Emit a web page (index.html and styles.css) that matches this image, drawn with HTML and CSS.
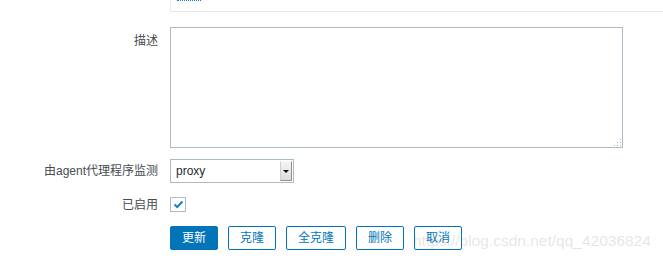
FILE: index.html
```html
<!DOCTYPE html>
<html lang="zh">
<head>
<meta charset="utf-8">
<title>Form</title>
<link rel="stylesheet" href="styles.css">
</head>
<body>
<div class="page">
  <div class="top-row">
    <div class="spacer"></div>
    <div class="top-frame"><span class="dotted-link"></span></div>
  </div>
  <form class="form">
    <label class="label label-area">描述</label>
    <div class="field">
      <div class="area-wrap">
        <textarea class="area"></textarea>
        <svg class="grip" width="9" height="9" viewBox="0 0 9 9">
          <rect x="7" y="1" width="1" height="1" fill="#b5b5b5"/>
          <rect x="7" y="4" width="1" height="1" fill="#b5b5b5"/>
          <rect x="4" y="4" width="1" height="1" fill="#b5b5b5"/>
          <rect x="7" y="7" width="1" height="1" fill="#b5b5b5"/>
          <rect x="4" y="7" width="1" height="1" fill="#b5b5b5"/>
          <rect x="1" y="7" width="1" height="1" fill="#b5b5b5"/>
        </svg>
      </div>
    </div>

    <label class="label label-mid">由agent代理程序监测</label>
    <div class="field">
      <div class="select">
        <span class="select-text">proxy</span>
        <span class="select-btn"><span class="tri"></span></span>
      </div>
    </div>

    <label class="label label-check">已启用</label>
    <div class="field field-check">
      <span class="checkbox">
        <svg width="11" height="9" viewBox="0 0 11 9"><path d="M1.5 4.5 L4.2 7 L9.5 1.5" fill="none" stroke="#1a7fc4" stroke-width="2"/></svg>
      </span>
    </div>

    <div></div>
    <div class="buttons">
      <button type="button" class="btn btn-primary">更新</button>
      <button type="button" class="btn">克隆</button>
      <button type="button" class="btn">全克隆</button>
      <button type="button" class="btn">删除</button>
      <button type="button" class="btn">取消</button>
    </div>
  </form>
  <div class="watermark">https://blog.csdn.net/qq_42036824</div>
</div>
</body>
</html>
```

FILE: styles.css
```css
html, body {
  margin: 0;
  padding: 0;
  background: #ffffff;
}
body {
  font-family: "Liberation Sans", Arial, "Noto Sans CJK SC", sans-serif;
  font-size: 12px;
  color: #3c4147;
}
.page {
  position: relative;
  width: 663px;
  height: 263px;
  overflow: hidden;
}
.top-row {
  display: grid;
  grid-template-columns: 170px 1fr;
  height: 12px;
}
.top-frame {
  border-left: 1px solid #ebebeb;
  border-bottom: 1px solid #e6e6e6;
  position: relative;
}
.dotted-link {
  display: block;
  margin-left: 6px;
  width: 24px;
  height: 1px;
  border-top: 1px dotted #1a7fc4;
}
.form {
  display: grid;
  grid-template-columns: 158px 1fr;
  column-gap: 12px;
  row-gap: 0;
  margin-top: 15px;
}
.label {
  text-align: right;
  font-family: "Liberation Sans", Arial, "Noto Sans CJK SC", sans-serif;
  font-size: 12px;
  line-height: 14px;
  color: #454b52;
}
.label-area { padding-top: 7px; }
.label-mid { padding-top: 16px; }
.label-check { padding-top: 15px; }
.area-wrap {
  position: relative;
  width: 453px;
  height: 121px;
}
.area {
  display: block;
  box-sizing: border-box;
  width: 453px;
  height: 121px;
  margin: 0;
  border: 1px solid #acbbc3;
  resize: none;
  outline: none;
  background: #fff;
}
.grip {
  position: absolute;
  right: 1px;
  bottom: 1px;
}
.select {
  margin-top: 11px;
  box-sizing: border-box;
  width: 124px;
  height: 24px;
  border: 1px solid #acbbc3;
  display: flex;
  align-items: center;
  justify-content: space-between;
  background: #fff;
}
.select-text {
  padding-left: 5px;
  font-size: 12px;
  color: #1f2c33;
}
.select-btn {
  box-sizing: border-box;
  width: 12px;
  height: 20px;
  margin-right: 1px;
  background: linear-gradient(#f4f4f4, #dcdcdc);
  border-left: 1px solid #cfcfcf;
  border-right: 1px solid #8f8f8f;
  border-bottom: 1px solid #8f8f8f;
  border-top: 1px solid #f8f8f8;
  display: flex;
  align-items: center;
  justify-content: center;
}
.tri {
  width: 0;
  height: 0;
  border-left: 3px solid transparent;
  border-right: 3px solid transparent;
  border-top: 3px solid #111;
}
.field-check {
  padding-top: 14px;
}
.checkbox {
  box-sizing: border-box;
  display: flex;
  align-items: center;
  justify-content: center;
  width: 16px;
  height: 15px;
  border: 1px solid #acbbc3;
  background: #fff;
}
.buttons {
  display: flex;
  gap: 10px;
  margin-top: 14px;
}
.btn {
  box-sizing: border-box;
  height: 24px;
  padding: 0 11px;
  margin: 0;
  border: 1px solid #0275b8;
  border-radius: 2px;
  background: #fff;
  color: #0275b8;
  font-family: "Liberation Sans", Arial, "Noto Sans CJK SC", sans-serif;
  font-size: 12px;
  line-height: 22px;
  cursor: pointer;
}
.btn-primary {
  background: #0275b8;
  color: #fff;
}
.watermark {
  position: absolute;
  left: 413px;
  top: 231px;
  font-family: "Liberation Sans", Arial, sans-serif;
  font-size: 15.5px;
  line-height: 20px;
  color: rgba(120, 120, 120, 0.2);
  white-space: nowrap;
  pointer-events: none;
}
```
